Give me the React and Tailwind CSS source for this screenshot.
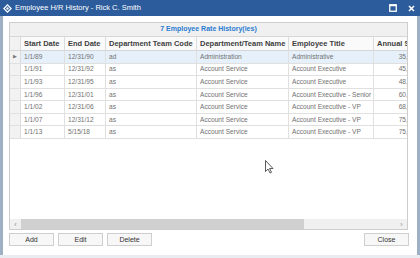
import React from 'react'

const rows = [
  ['1/1/89', '12/31/90', 'ad', 'Administration', 'Administrative', '35,000.00'],
  ['1/1/91', '12/31/92', 'as', 'Account Service', 'Account Executive', '45,000.00'],
  ['1/1/93', '12/31/95', 'as', 'Account Service', 'Account Executive', '48,000.00'],
  ['1/1/96', '12/31/01', 'as', 'Account Service', 'Account Executive - Senior', '60,000.00'],
  ['1/1/02', '12/31/06', 'as', 'Account Service', 'Account Executive - VP', '68,000.00'],
  ['1/1/07', '12/31/12', 'as', 'Account Service', 'Account Executive - VP', '75,000.00'],
  ['1/1/13', '5/15/18', 'as', 'Account Service', 'Account Executive - VP', '75,000.00'],
]

const cols = ['w-[44px]', 'w-[41px]', 'w-[91px]', 'w-[92px]', 'w-[85px]', 'w-[58px]']
const heads = ['Start Date', 'End Date', 'Department Team Code', 'Department/Team Name', 'Employee Title', 'Annual Salary']

function Btn({ children, className = '' }) {
  return (
    <button className={`h-[13px] w-[45px] border border-[#cfcfcf] bg-[#f7f7f7] text-[7px] text-[#333] leading-none ${className}`}>
      {children}
    </button>
  )
}

export default function App() {
  return (
    <div className="w-[420px] h-[258px] bg-[#e9edf2] font-['Liberation_Sans',sans-serif] overflow-hidden">
      <div className="h-[255px] flex flex-col bg-[#9fb0c4] relative">
        {/* title bar */}
        <div className="h-[16px] bg-[#2c5c9c] flex items-center pl-[3px] pr-[5px] text-white">
          <svg width="9" height="9" viewBox="0 0 10 10" className="mr-[3px]">
            <path d="M5 1 L9 5 L5 9 L1 5 Z" fill="none" stroke="#fff" strokeWidth="1.4" />
            <circle cx="5" cy="5" r="1.3" fill="#fff" />
          </svg>
          <span className="text-[7.5px] leading-none">Employee H/R History - Rick C. Smith</span>
          <div className="ml-auto flex items-center gap-[11px]">
            <svg width="8" height="8" viewBox="0 0 8 8">
              <rect x="0.75" y="0.75" width="6.5" height="6.5" fill="none" stroke="#fff" strokeWidth="1.3" />
              <line x1="0.75" y1="1.6" x2="7.25" y2="1.6" stroke="#fff" strokeWidth="1.3" />
            </svg>
            <svg width="7" height="7" viewBox="0 0 7 7">
              <path d="M1 1 L6 6 M6 1 L1 6" stroke="#fff" strokeWidth="1.5" />
            </svg>
          </div>
        </div>

        {/* body */}
        <div className="flex-1 mx-[3px] bg-white flex flex-col pt-[6px] pl-[6px] pr-[9px]">
          <div className="h-[208px] border border-[#cdcdcd] flex flex-col overflow-hidden">
            <div className="h-[14px] shrink-0 bg-[#f0f0f0] border-b border-[#d6d6d6] flex items-center justify-center text-[7px] font-bold text-[#2a7bd0]">
              7 Employee Rate History(ies)
            </div>
            <div className="h-[14px] shrink-0 flex border-b border-[#d6d6d6] bg-[#fafafa] text-[7.5px] font-bold text-[#404040]">
              <div className="w-[11px] shrink-0 border-r border-[#dcdcdc] bg-[#f2f2f2]" />
              {heads.map((h, i) => (
                <div key={h} className={`${cols[i]} shrink-0 border-r border-[#dcdcdc] flex items-center pl-[3px] whitespace-nowrap overflow-hidden`}>
                  {h}
                </div>
              ))}
            </div>
            {rows.map((r, ri) => (
              <div key={ri} className={`h-[12.57px] shrink-0 flex border-b border-[#e0e0e0] text-[6.6px] text-[#727272] ${ri === 0 ? 'bg-[#e5f0fb]' : ''}`}>
                <div className="w-[11px] shrink-0 border-r border-[#dcdcdc] bg-[#f2f2f2] flex items-center justify-center text-[5px] text-[#777]">
                  {ri === 0 ? '▶' : ''}
                </div>
                {r.map((c, ci) => (
                  <div key={ci} className={`${cols[ci]} shrink-0 border-r border-[#e0e0e0] flex items-center whitespace-nowrap overflow-hidden ${ci === 5 ? 'justify-end pr-[3px]' : 'pl-[3px]'}`}>
                    {c}
                  </div>
                ))}
              </div>
            ))}
            <div className="flex-1" />
            <div className="h-[10px] shrink-0 flex items-center bg-[#f0f0f0] text-[7px] text-[#888]">
              <div className="w-[11px] text-center leading-none">‹</div>
              <div className="w-[283px] h-full bg-[#d0d0d0]" />
              <div className="ml-auto w-[11px] text-center leading-none">›</div>
            </div>
          </div>

          <div className="mt-[3px] flex items-center gap-[4px]">
            <Btn>Add</Btn>
            <Btn>Edit</Btn>
            <Btn>Delete</Btn>
            <Btn className="ml-auto mr-[-1px]">Close</Btn>
          </div>
        </div>

        {/* mouse cursor */}
        <svg width="9" height="14" viewBox="0 0 9 14" className="absolute left-[265px] top-[160px]">
          <path d="M0.5 0.5 L0.5 11.5 L3 9 L5 13 L6.5 12.3 L4.6 8.5 L8 8.5 Z" fill="#fff" stroke="#333" strokeWidth="0.8" />
        </svg>
      </div>
    </div>
  )
}
